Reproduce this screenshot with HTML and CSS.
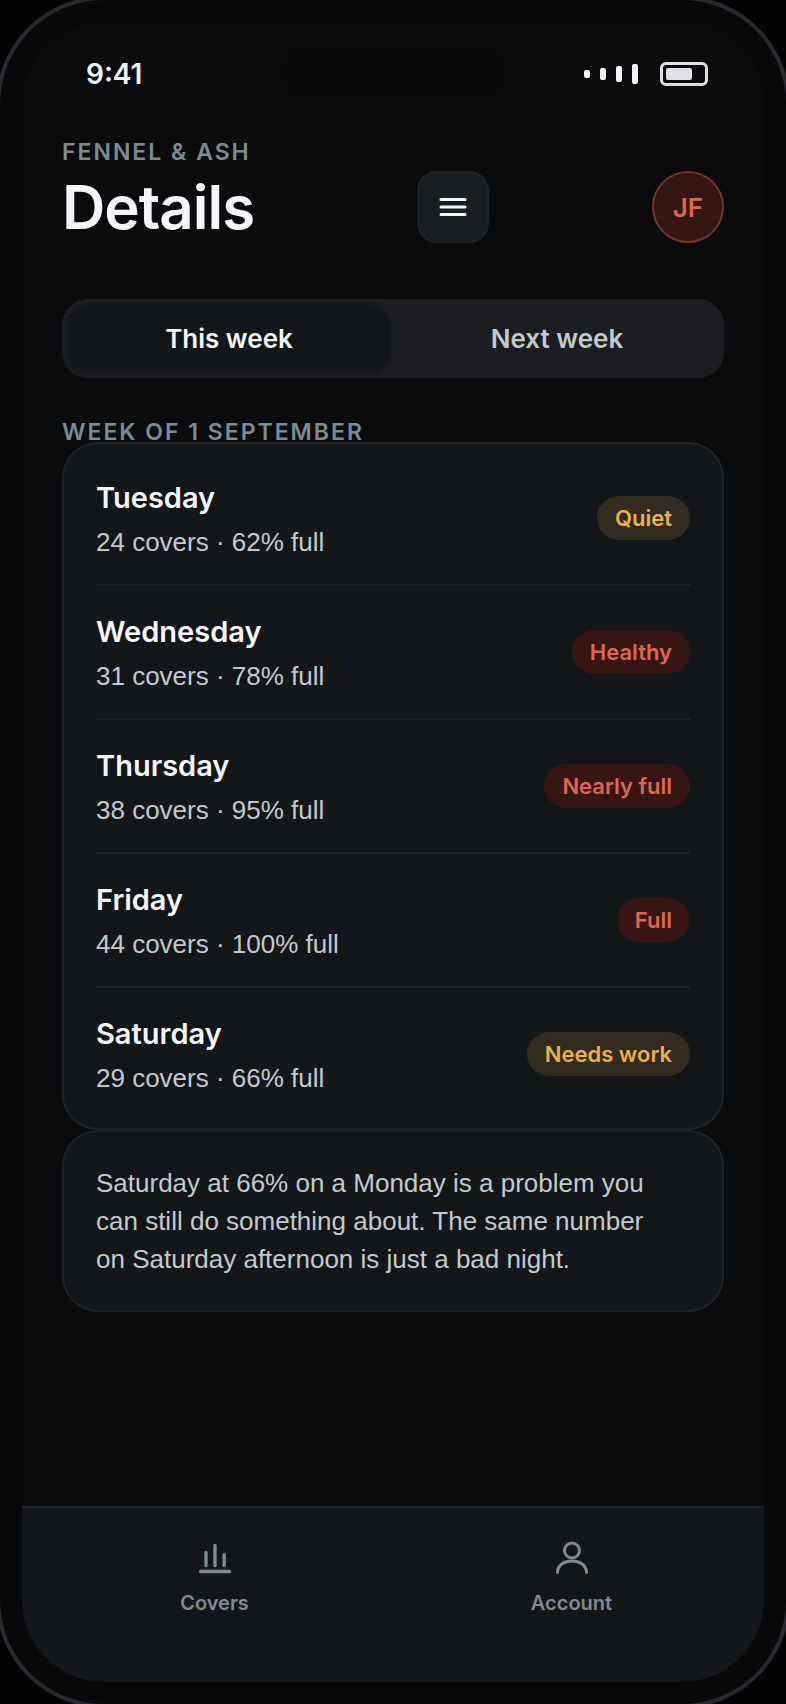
FILE: index.html
```html
<!DOCTYPE html>
<html lang="en">
	<head>
		<title>Fennel &amp; Ash - Details</title>
		<meta charset="utf-8">
		<meta name="viewport" content="width=device-width, initial-scale=1">
		<link rel="stylesheet" href="styles.css">
	</head>
	<body>
		<div class="phone">
			<div class="screen">
				<div class="island"></div>
				<div class="status">
					<span class="time">9:41</span>
					<div class="status-icons">
						<svg class="signal" width="54" height="24" viewBox="0 0 54 24" fill="#f5f6fa">
							<rect x="0" y="8" width="6" height="8" rx="2"/>
							<rect x="16" y="6" width="6" height="12" rx="2"/>
							<rect x="32" y="4" width="6" height="16" rx="2"/>
							<rect x="48" y="2" width="6" height="20" rx="2"/>
						</svg>
						<svg width="48" height="24" viewBox="0 0 48 24">
							<rect x="1.5" y="1.5" width="45" height="21" rx="4.5" fill="none" stroke="#dfe0e3" stroke-width="3"/>
							<rect x="6" y="6" width="26" height="12" rx="2" fill="#dfe0e3"/>
						</svg>
					</div>
				</div>
				<main>
					<p class="eyebrow">FENNEL &amp; ASH</p>
					<header class="top">
						<h1>Details</h1>
						<button class="menu" type="button" aria-label="Menu">
							<svg width="28" height="20" viewBox="0 0 28 20" stroke="#f5f6fa" stroke-width="3" stroke-linecap="round">
								<path d="M2 2.5h24M2 10h24M2 17.5h24"/>
							</svg>
						</button>
						<button class="avatar" type="button">JF</button>
					</header>
					<div class="segment">
						<button class="active" type="button">This week</button>
						<button type="button">Next week</button>
					</div>
					<h2 class="label">WEEK OF 1 SEPTEMBER</h2>
					<ul class="card days">
						<li>
							<div>
								<h3>Tuesday</h3>
								<p>24 covers · 62% full</p>
							</div>
							<span class="pill warn">Quiet</span>
						</li>
						<li>
							<div>
								<h3>Wednesday</h3>
								<p>31 covers · 78% full</p>
							</div>
							<span class="pill">Healthy</span>
						</li>
						<li>
							<div>
								<h3>Thursday</h3>
								<p>38 covers · 95% full</p>
							</div>
							<span class="pill">Nearly full</span>
						</li>
						<li>
							<div>
								<h3>Friday</h3>
								<p>44 covers · 100% full</p>
							</div>
							<span class="pill">Full</span>
						</li>
						<li>
							<div>
								<h3>Saturday</h3>
								<p>29 covers · 66% full</p>
							</div>
							<span class="pill warn">Needs work</span>
						</li>
					</ul>
					<p class="card note">Saturday at 66% on a Monday is a problem you can still do something about. The same number on Saturday afternoon is just a bad night.</p>
				</main>
				<nav class="tabs">
					<a href="#covers">
						<svg width="44" height="44" viewBox="0 0 44 44" fill="none" stroke="currentColor" stroke-width="3.4" stroke-linecap="round">
							<path d="M7.5 37.5h29M13 18.500v13M22 11.500v20M31.200 20.500v11"/>
						</svg>
						Covers
					</a>
					<a href="#account">
						<svg width="44" height="44" viewBox="0 0 44 44" fill="none" stroke="currentColor" stroke-width="3" stroke-linecap="round">
							<circle cx="22" cy="16.500" r="7.500"/>
							<path d="M7.500 38.500c0-7.500 6.500-11.500 14.500-11.500s14.500 4 14.500 11.500"/>
						</svg>
						Account
					</a>
				</nav>
			</div>
		</div>
	</body>
</html>
```
FILE: styles.css
```css
* {
	box-sizing: border-box;
}
html, body, h1, h2, h3, p, ul {
	margin: 0;
	padding: 0;
}
body {
	background: #030405;
	color: #f5f6fa;
	font-family: Inter, "Liberation Sans", sans-serif;
}
button {
	border: 0;
	padding: 0;
	font: inherit;
	color: inherit;
}
.phone {
	min-height: 100vh;
	display: flex;
	padding: 22px;
	border-radius: 104px;
	background: #09090b;
	box-shadow: 0 0 0 4px #29292e;
	overflow: hidden;
}
.screen {
	position: relative;
	flex: 1;
	display: flex;
	flex-direction: column;
	border-radius: 82px;
	background: #090b0d;
	overflow: hidden;
}
/* camera cutout, sits over the status bar */
.island {
	position: absolute;
	top: 20px;
	left: 50%;
	width: 224px;
	height: 60px;
	margin-left: -112px;
	border-radius: 30px;
	background: #090a0c;
}
.status {
	height: 104px;
	padding: 0 56px 0 64px;
	display: flex;
	align-items: center;
	justify-content: space-between;
}
.time {
	font-size: 28px;
	font-weight: 600;
}
.status-icons {
	display: flex;
	gap: 22px;
}
main {
	padding: 12px 40px 40px;
}
.eyebrow, .label {
	color: #7d8c90;
	font-size: 23px;
	font-weight: 600;
	letter-spacing: 2px;
}
.eyebrow {
	line-height: 28px;
	margin-bottom: 5px;
}
.top {
	display: flex;
	align-items: center;
	justify-content: space-between;
}
h1 {
	font-size: 60px;
	line-height: 72px;
	font-weight: 600;
	letter-spacing: -1px;
}
.menu, .avatar {
	width: 72px;
	height: 72px;
	display: flex;
	align-items: center;
	justify-content: center;
}
.menu {
	border: 2px solid #1f2226;
	border-radius: 20px;
	background: #1a1d21;
}
.avatar {
	border: 2px solid #74342b;
	border-radius: 50%;
	background: #351612;
	color: #e06650;
	font-size: 26px;
	font-weight: 600;
}
.segment {
	display: grid;
	grid-template-columns: 1fr 1fr;
	gap: 6px;
	margin-top: 56px;
	padding: 6px;
	border-radius: 26px;
	background: #1b1d22;
}
.segment button {
	height: 67px;
	border-radius: 20px;
	background: none;
	color: #c3cacd;
	font-size: 26px;
	font-weight: 600;
}
.segment .active {
	background: #14171a;
	color: #f5f6fa;
	box-shadow: 0 1px 4px rgba(0, 0, 0, 0.3);
}
.label {
	line-height: 20px;
	margin-top: 44px;
}
.card {
	border: 2px solid #1f2327;
	border-radius: 36px;
	background: #14171a;
}
.days {
	padding: 8px 32px;
	list-style: none;
}
.days li {
	display: flex;
	align-items: center;
	justify-content: space-between;
	padding: 22px 0;
}
.days li + li {
	border-top: 2px solid #1f2327;
}
h3 {
	font-size: 29px;
	line-height: 48px;
	font-weight: 600;
}
.days p, .note {
	color: #c3cacd;
	font-family: "Liberation Sans", Arial, sans-serif;
	font-size: 26px;
}
.days p {
	line-height: 40px;
}
.pill {
	padding: 0 18px;
	border-radius: 22px;
	background: #351612;
	color: #e06650;
	font-size: 22px;
	line-height: 44px;
	font-weight: 600;
}
.pill.warn {
	background: #332b1f;
	color: #e8b04a;
}
.note {
	padding: 32px 48px 32px 32px;
	line-height: 38px;
}
.tabs {
	display: flex;
	margin-top: auto;
	padding: 26px 14px 65px;
	border-top: 2px solid #1f2327;
	background: #14171a;
}
.tabs a {
	flex: 1;
	display: flex;
	flex-direction: column;
	align-items: center;
	gap: 11px;
	color: #7d8c90;
	font-size: 20px;
	line-height: 28px;
	font-weight: 600;
	text-decoration: none;
}
```
